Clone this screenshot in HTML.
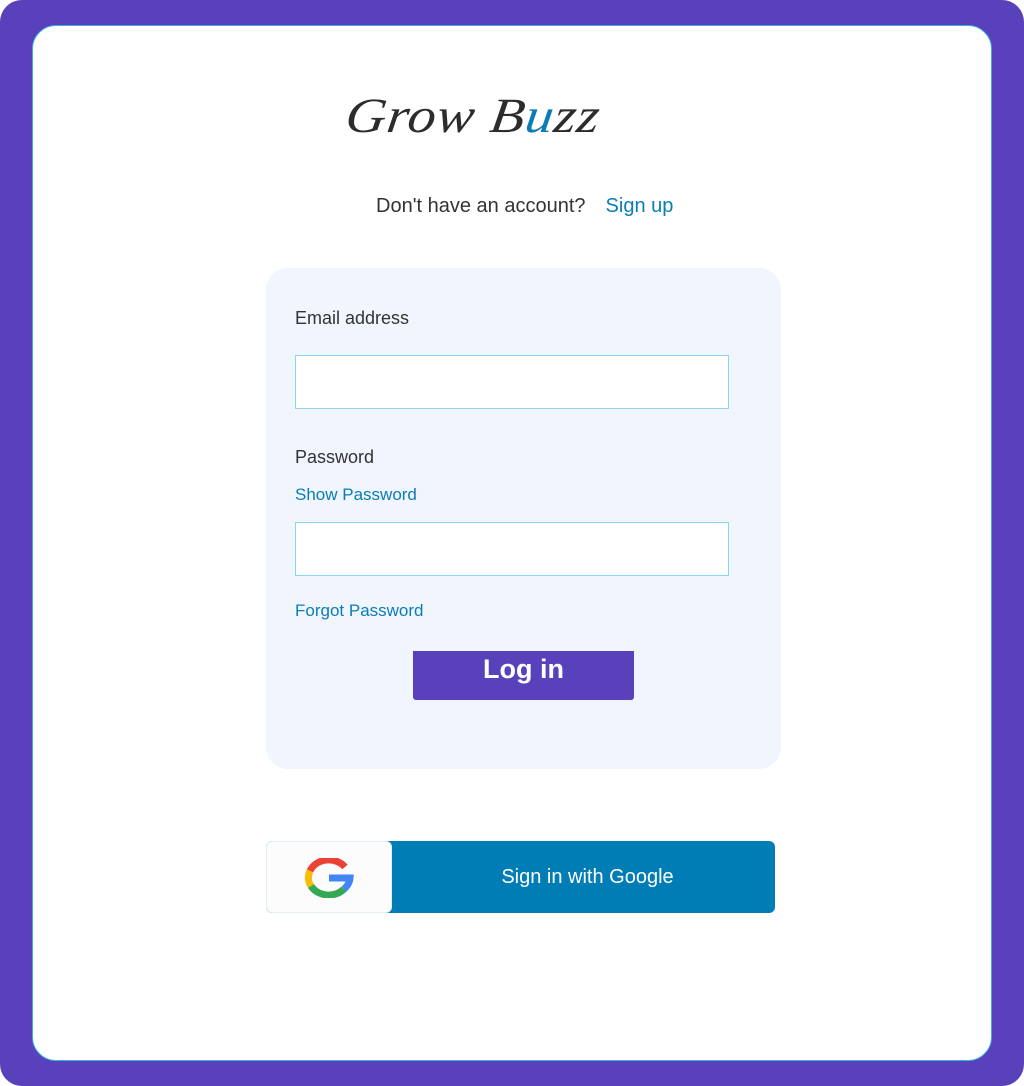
<!DOCTYPE html>
<html><head><style>
html,body{margin:0;padding:0;background:#fff;}
body{width:1024px;height:1086px;position:relative;font-family:"Liberation Sans",Arial,sans-serif;overflow:hidden;}
.outer{position:absolute;left:0;top:0;width:1024px;height:1086px;background:#5a41bc;border-radius:22px;}
.inner{position:absolute;left:32px;top:25px;width:958px;height:1034px;background:#fff;border:1px solid #3ab0e6;border-radius:24px;}
.logo{position:absolute;left:350px;top:88px;font-family:"Liberation Serif",serif;font-style:italic;font-size:56px;color:#2c2c2c;letter-spacing:1px;transform:skewX(-8deg) scaleY(0.88);transform-origin:left top;}
.logo span{color:#0b7db5;}
.q{position:absolute;top:195px;left:376px;font-size:20px;color:#333;}
.q a{color:#0a7db6;margin-left:20px;}
.card{position:absolute;left:266px;top:268px;width:515px;height:501px;background:#f1f5fd;border-radius:22px;}
.lbl{position:absolute;left:29px;font-size:18px;color:#333;}
.lnk{position:absolute;left:29px;font-size:17px;color:#0a7db6;}
.inp{position:absolute;left:29px;width:432px;height:52px;background:#fff;border:1px solid #8dd3f3;}
.btn{position:absolute;left:147px;top:383px;width:221px;height:49px;background:#5a41bc;border-radius:0 0 3px 3px;color:#fff;font-weight:bold;font-size:27px;text-align:center;line-height:36px;}
.g{position:absolute;left:266px;top:841px;width:509px;height:72px;background:#007db5;border-radius:6px;}
.gw{position:absolute;left:0;top:0;width:126px;height:72px;background:#fcfcfc;border-radius:6px;border:1px solid #e3eef5;box-sizing:border-box;}
.gt{position:absolute;left:134px;right:0;top:0;line-height:72px;text-align:center;color:#fff;font-size:20px;}
</style></head><body>
<div class="outer"></div>
<div class="inner"></div>
<div class="logo">Grow B<span>u</span>zz</div>
<div class="q">Don't have an account?<a>Sign up</a></div>
<div class="card">
<div class="lbl" style="top:40px">Email address</div>
<div class="inp" style="top:87px"></div>
<div class="lbl" style="top:179px">Password</div>
<div class="lnk" style="top:217px">Show Password</div>
<div class="inp" style="top:254px"></div>
<div class="lnk" style="top:333px">Forgot Password</div>
<div class="btn">Log in</div>
</div>
<div class="g"><div class="gw">
<svg style="position:absolute;left:37px;top:16px" width="50" height="40" viewBox="0 0 50 40">
<path d="M41 9 A20 17 0 0 0 6 13" stroke="#ea4335" stroke-width="7" fill="none"/>
<path d="M6 13 A20 17 0 0 0 7 28" stroke="#fbbc05" stroke-width="7" fill="none"/>
<path d="M7 28 A20 17 0 0 0 40 31" stroke="#34a853" stroke-width="7" fill="none"/>
<path d="M40 31 A20 17 0 0 0 46 20 L25 20" stroke="#4285f4" stroke-width="7" fill="none"/>
</svg></div>
<div class="gt">Sign in with Google</div></div>
</body></html>
